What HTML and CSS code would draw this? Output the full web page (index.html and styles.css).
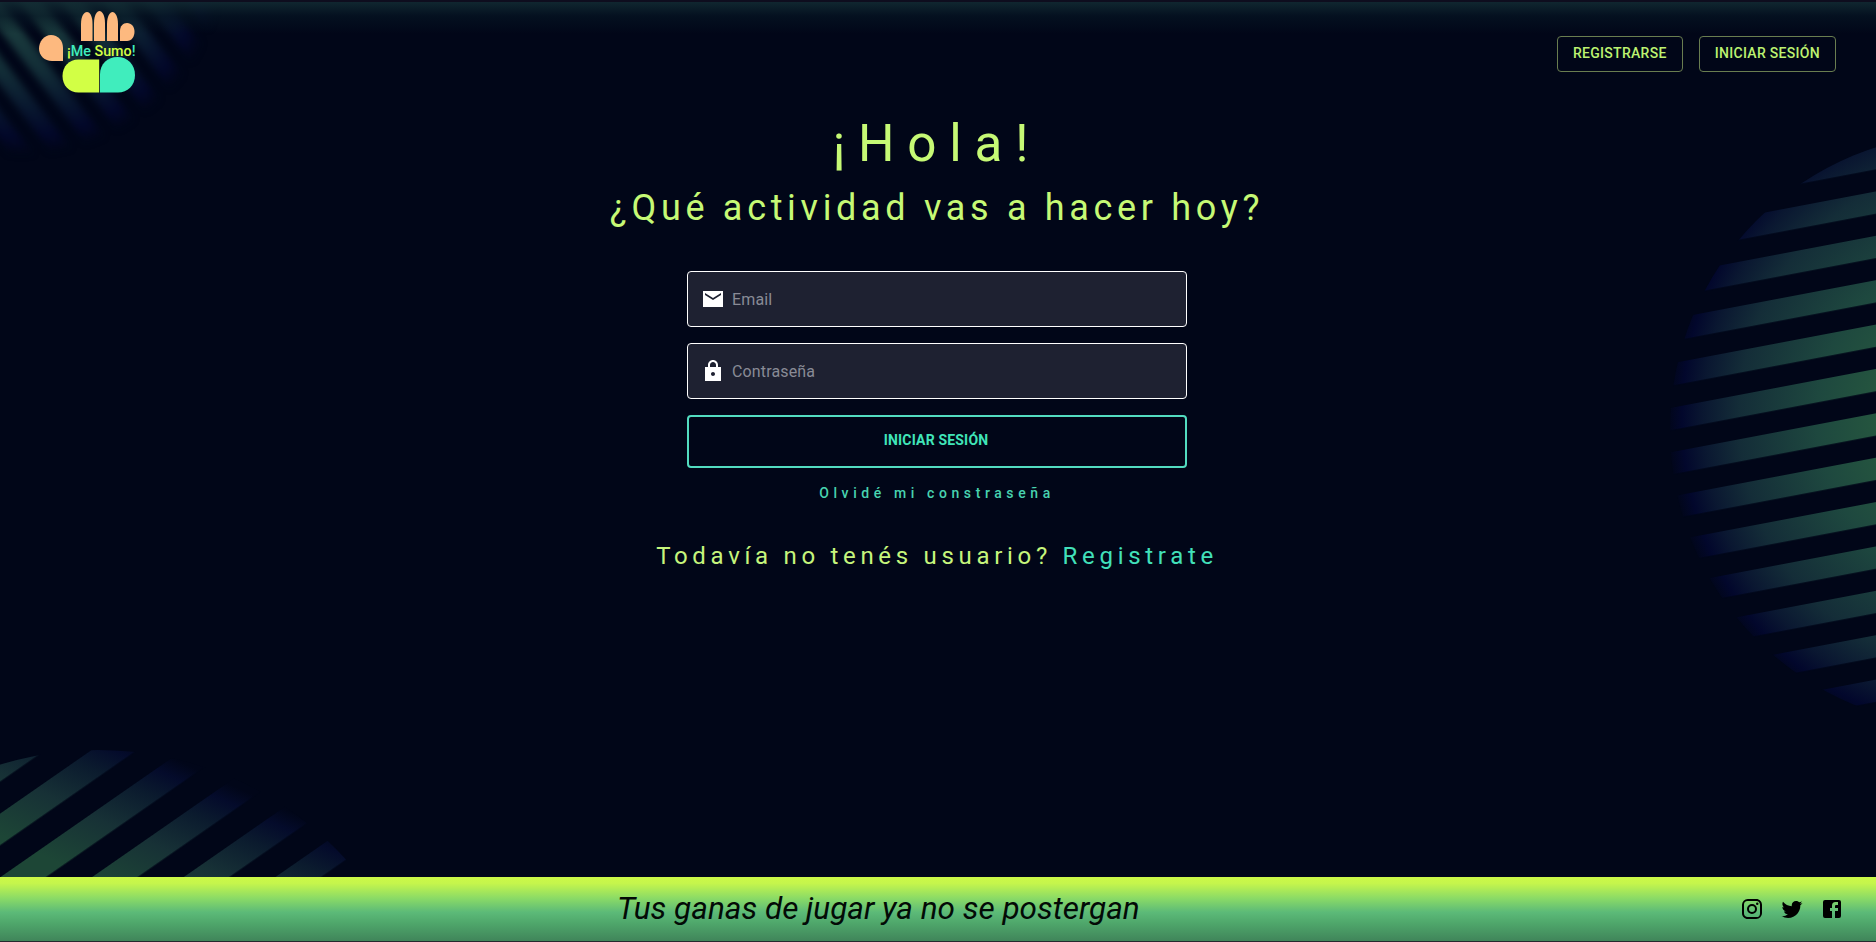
FILE: index.html
```html
<!DOCTYPE html>
<html lang="es">
<head>
<meta charset="utf-8">
<title>¡Me Sumo!</title>
<link rel="stylesheet" href="styles.css">
</head>
<body>
<div class="page">
  <svg class="backdrop" viewBox="0 0 1876 942" aria-hidden="true">
    <defs>
      <pattern id="stripes-right" width="400" height="43.6" patternUnits="userSpaceOnUse" patternTransform="translate(1876 191.4) rotate(-10.75)">
        <rect width="400" height="22" fill="#fff"/>
      </pattern>
      <pattern id="stripes-bottom" width="400" height="52.3" patternUnits="userSpaceOnUse" patternTransform="translate(2 876) rotate(-34.8)">
        <rect width="400" height="26" fill="#fff"/>
      </pattern>
      <pattern id="stripes-top" width="400" height="33.2" patternUnits="userSpaceOnUse" patternTransform="translate(0 1) rotate(52.5)">
        <rect width="400" height="18" fill="#fff"/>
      </pattern>
      <mask id="mask-right" maskUnits="userSpaceOnUse" x="1600" y="100" width="276" height="640"><rect x="1600" y="100" width="276" height="640" fill="url(#stripes-right)"/></mask>
      <mask id="mask-bottom" maskUnits="userSpaceOnUse" x="0" y="740" width="400" height="140"><rect y="740" width="400" height="140" fill="url(#stripes-bottom)"/></mask>
      <mask id="mask-top" maskUnits="userSpaceOnUse" x="-20" y="-20" width="280" height="200"><rect x="-20" y="-20" width="280" height="200" fill="url(#stripes-top)"/></mask>
      <radialGradient id="glow-right" gradientUnits="userSpaceOnUse" cx="0" cy="0" r="1" gradientTransform="translate(1967 417) scale(300 325)">
        <stop offset=".3" stop-color="#25563f"/>
        <stop offset=".5" stop-color="#1e483f"/>
        <stop offset=".76" stop-color="#142d38"/>
        <stop offset=".88" stop-color="#0a1731"/>
        <stop offset=".95" stop-color="#02072c"/>
        <stop offset="1" stop-color="#010619"/>
      </radialGradient>
      <linearGradient id="glow-bottom" gradientUnits="userSpaceOnUse" x1="30" y1="850" x2="89.5" y2="720">
        <stop offset="0" stop-color="#1d4636"/>
        <stop offset=".4" stop-color="#173136"/>
        <stop offset=".7" stop-color="#0b1b2e"/>
        <stop offset=".88" stop-color="#040b2b"/>
        <stop offset="1" stop-color="#010619"/>
      </linearGradient>
      <radialGradient id="glow-top" gradientUnits="userSpaceOnUse" cx="20" cy="-50" r="203">
        <stop offset=".3" stop-color="#1d403f"/>
        <stop offset=".6" stop-color="#122d37"/>
        <stop offset=".8" stop-color="#07152e"/>
        <stop offset=".92" stop-color="#02072a"/>
        <stop offset="1" stop-color="#010619"/>
      </radialGradient>
      <filter id="soft" color-interpolation-filters="sRGB"><feGaussianBlur stdDeviation="3.5"/></filter>
    </defs>
    <circle cx="1967" cy="430" r="297" fill="url(#glow-right)" mask="url(#mask-right)"/>
    <circle cx="98" cy="1086" r="336" fill="url(#glow-bottom)" mask="url(#mask-bottom)"/>
    <g filter="url(#soft)"><circle cx="20" cy="-50" r="203" fill="url(#glow-top)" mask="url(#mask-top)"/></g>
  </svg>

  <header class="header">
    <a class="logo" href="#">
      <svg class="logo-hand" viewBox="0 0 98 84" aria-hidden="true">
        <g fill="#fdb97f">
          <path d="M42 31V14C42 6 45 2 48 2s5.500 4 5.500 12v17z"/>
          <path d="M55 31V13C55 5 58 1 60.500 1S66 5 66 13v18z"/>
          <path d="M68 31V14C68 6 71 2 73.500 2S79 6 79 14v17z"/>
          <path d="M81 31V21c0-5 3-8 7-8 4.500 0 7.500 3.800 7.500 8.700 0 5-3 9.300-7.500 9.300z"/>
          <path d="M24 51H13C5.500 51 0 45.500 0 38.500S5 25 12 25s12 5.500 12 13z"/>
        </g>
        <path d="M60.200 49.500H39.500c-9.500 0-16 7-16 16.500s6.500 16.500 16 16.500h20.700z" fill="#d2ff45"/>
        <path d="M61 82.500V64c0-10 7.500-17 17.500-17C88.500 47 96 54.500 96 65s-7.500 17.500-17 17.500z" fill="#40edbd"/>
      </svg>
      <span class="logo-name"><b class="lime">¡</b><b class="teal">Me </b><b class="lime">Sumo</b><b class="teal">!</b></span>
    </a>
    <nav class="nav">
      <a class="nav-button" href="#">REGISTRARSE</a>
      <a class="nav-button" href="#">INICIAR SESIÓN</a>
    </nav>
  </header>

  <main class="main">
    <h1 class="title">¡Hola!</h1>
    <h2 class="subtitle">¿Qué actividad vas a hacer hoy?</h2>
    <form class="form">
      <label class="field">
        <svg class="field-icon" viewBox="0 0 24 24"><path d="M22 4H2v16h20V4zm-2 4l-8 5-8-5V6l8 5 8-5v2z"/></svg>
        <input class="input" type="email" placeholder="Email">
      </label>
      <label class="field">
        <svg class="field-icon" viewBox="0 0 24 24"><path d="M20 8h-3V6c0-2.760-2.240-5-5-5S7 3.240 7 6v2H4v14h16V8zm-8 9c-1.100 0-2-.9-2-2s.9-2 2-2 2 .9 2 2-.9 2-2 2zM9 8V6c0-1.660 1.340-3 3-3s3 1.340 3 3v2H9z"/></svg>
        <input class="input" type="password" placeholder="Contraseña">
      </label>
      <button class="submit" type="button">INICIAR SESIÓN</button>
    </form>
    <a class="forgot" href="#">Olvidé mi constraseña</a>
    <p class="signup">Todavía no tenés usuario? <a class="signup-link" href="#">Registrate</a></p>
  </main>

  <footer class="footer">
    <p class="slogan">Tus ganas de jugar ya no se postergan</p>
    <div class="social">
      <svg class="social-icon" viewBox="0 0 24 24"><path d="M7.800 2h8.400C19.400 2 22 4.600 22 7.800v8.400a5.800 5.800 0 0 1-5.800 5.800H7.800C4.600 22 2 19.400 2 16.200V7.800A5.800 5.800 0 0 1 7.800 2m-.2 2A3.600 3.600 0 0 0 4 7.600v8.800C4 18.390 5.610 20 7.600 20h8.800a3.600 3.600 0 0 0 3.600-3.600V7.600C20 5.610 18.390 4 16.400 4H7.600m9.650 1.500a1.250 1.250 0 1 1 0 2.500 1.250 1.250 0 0 1 0-2.500M12 7a5 5 0 1 1 0 10 5 5 0 0 1 0-10m0 2a3 3 0 1 0 0 6 3 3 0 0 0 0-6z"/></svg>
      <svg class="social-icon" viewBox="0 0 24 24"><path d="M22.460 6c-.77.35-1.600.58-2.460.69.88-.53 1.560-1.370 1.880-2.380-.83.5-1.750.85-2.720 1.050C18.370 4.500 17.260 4 16 4c-2.350 0-4.270 1.920-4.270 4.290 0 .34.04.67.11.98C8.280 9.090 5.110 7.380 3 4.790c-.37.63-.58 1.370-.58 2.150 0 1.490.75 2.810 1.910 3.560-.71 0-1.370-.2-1.950-.5v.03c0 2.080 1.480 3.820 3.440 4.210a4.220 4.220 0 0 1-1.930.07 4.280 4.280 0 0 0 4 2.980 8.521 8.521 0 0 1-5.330 1.840c-.34 0-.68-.02-1.020-.06C3.440 20.290 5.700 21 8.120 21 16 21 20.330 14.460 20.330 8.790c0-.19 0-.37-.01-.56.84-.6 1.560-1.360 2.140-2.230z"/></svg>
      <svg class="social-icon" viewBox="0 0 24 24"><path d="M5 3h14a2 2 0 0 1 2 2v14a2 2 0 0 1-2 2H5a2 2 0 0 1-2-2V5a2 2 0 0 1 2-2m13 2h-2.500A3.500 3.500 0 0 0 12 8.500V11h-2v3h2v7h3v-7h3v-3h-3V9a1 1 0 0 1 1-1h2V5z"/></svg>
    </div>
  </footer>
</div>
</body>
</html>
```
FILE: styles.css
```css
* {
  box-sizing: border-box;
}

body {
  margin: 0;
  background: #010618;
  font-family: Roboto, "Liberation Sans", sans-serif;
}

.page {
  position: relative;
  z-index: 0;
  display: flex;
  flex-direction: column;
  height: 942px;
  overflow: hidden;
  border-top: 2px solid #0e0d1e;
  border-bottom: 1px solid #26282e;
}

.backdrop {
  position: absolute;
  z-index: -1;
  top: -2px;
  left: 0;
  width: 1876px;
  height: 942px;
}

.header {
  display: flex;
  justify-content: space-between;
  height: 108px;
  padding: 8px 40px 0 39px;
  background: linear-gradient(rgba(18, 42, 50, .9), rgba(6, 22, 36, .65) 14px, rgba(1, 6, 24, 0) 32px);
}

.logo {
  position: relative;
  width: 98px;
  height: 84px;
  text-decoration: none;
}

.logo-hand {
  display: block;
  width: 98px;
  height: 84px;
}

.logo-name {
  position: absolute;
  top: 33px;
  left: 28px;
  font-size: 14.300px;
  line-height: 16px;
  white-space: pre;
}

.logo-name b {
  font-weight: 500;
}

.lime {
  color: #d2ff45;
}

.teal {
  color: #40edbd;
}

.nav {
  display: flex;
  gap: 16px;
  padding-top: 26px;
}

.nav-button {
  height: 36px;
  padding: 5px 15px;
  border: 1px solid #697d50;
  border-radius: 4px;
  color: #bdf271;
  font-size: 14px;
  font-weight: 500;
  line-height: 22px;
  letter-spacing: .3px;
  text-decoration: none;
}

.main {
  display: flex;
  flex: 1;
  flex-direction: column;
  align-items: center;
  padding-right: 2px;
}

.title,
.subtitle,
.signup,
.slogan {
  margin: 0;
  font-weight: 400;
}

.title {
  margin-top: 4px;
  color: #c6f975;
  font-size: 51.2px;
  line-height: 60px;
  letter-spacing: .25em;
}

.subtitle {
  margin-top: 13px;
  color: #c6f975;
  font-size: 36px;
  line-height: 42px;
  letter-spacing: 4.68px;
}

.form {
  display: flex;
  flex-direction: column;
  gap: 16px;
  width: 500px;
  margin-top: 42px;
}

.field {
  display: flex;
  align-items: center;
  gap: 7px;
  height: 56px;
  padding: 0 13px;
  border: 1px solid #fff;
  border-radius: 4px;
  background: #1e2131;
}

.field-icon {
  width: 24px;
  height: 24px;
  fill: #fff;
}

.input {
  flex: 1;
  padding: 0;
  border: 0;
  outline: 0;
  background: none;
  color: #fff;
  font: 16px Roboto, "Liberation Sans", sans-serif;
  letter-spacing: .15px;
}

.input::placeholder {
  color: #898b96;
  opacity: 1;
}

.submit {
  height: 53px;
  padding: 0 2px 3px 0;
  border: 2px solid #52dcc0;
  border-radius: 4px;
  background: none;
  color: #40e5b9;
  font: 700 14px Roboto, "Liberation Sans", sans-serif;
  letter-spacing: .18px;
}

.forgot {
  margin-top: 17px;
  color: #48d3b0;
  font-size: 14px;
  font-weight: 500;
  line-height: 16px;
  letter-spacing: 4.6px;
  text-decoration: none;
}

.signup {
  margin-top: 40px;
  color: #c6f57c;
  font-size: 24px;
  line-height: 30px;
  letter-spacing: 4.69px;
}

.signup-link {
  color: #42e0ba;
  text-decoration: none;
}

.footer {
  display: flex;
  align-items: center;
  justify-content: space-between;
  height: 64px;
  padding: 0 32px 0 617px;
  background: linear-gradient(#cdf947, #c5f54c 10%, #8bdb66 33%, #5cba78 55%, #4fa76b 72%, #40855a);
}

.slogan {
  color: #030a06;
  font-size: 31.500px;
  font-style: italic;
  line-height: 36px;
}

.social {
  display: flex;
  gap: 16px;
}

.social-icon {
  width: 24px;
  height: 24px;
}
```
